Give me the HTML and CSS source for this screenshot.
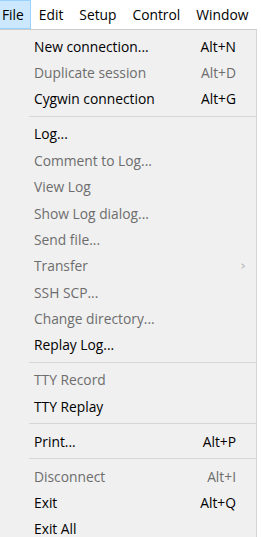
FILE: index.html
```html
<!DOCTYPE html>
<html lang="en">
<head>
  <meta charset="UTF-8" />
  <title>File menu</title>
  <link rel="stylesheet" href="styles.css">
</head>
<body>
  <div class="menubar">
    <span class="top active">File</span>
    <span class="top">Edit</span>
    <span class="top">Setup</span>
    <span class="top">Control</span>
    <span class="top">Window</span>
  </div>
  <div class="dropdown">
    <div class="item"><span>New connection...</span><span class="key">Alt+N</span></div>
    <div class="item off"><span>Duplicate session</span><span class="key">Alt+D</span></div>
    <div class="item"><span>Cygwin connection</span><span class="key">Alt+G</span></div>
    <div class="sep"></div>
    <div class="item"><span>Log...</span></div>
    <div class="item off"><span>Comment to Log...</span></div>
    <div class="item off"><span>View Log</span></div>
    <div class="item off"><span>Show Log dialog...</span></div>
    <div class="item off"><span>Send file...</span></div>
    <div class="item off"><span>Transfer</span><span class="arrow">&gt;</span></div>
    <div class="item off"><span>SSH SCP...</span></div>
    <div class="item off"><span>Change directory...</span></div>
    <div class="item"><span>Replay Log...</span></div>
    <div class="sep"></div>
    <div class="item off"><span>TTY Record</span></div>
    <div class="item"><span>TTY Replay</span></div>
    <div class="sep"></div>
    <div class="item"><span>Print...</span><span class="key">Alt+P</span></div>
    <div class="sep"></div>
    <div class="item off"><span>Disconnect</span><span class="key">Alt+I</span></div>
    <div class="item"><span>Exit</span><span class="key">Alt+Q</span></div>
    <div class="item"><span>Exit All</span></div>
  </div>
</body>
</html>
```

FILE: styles.css
```css
body { margin: 0; background: #fff; font-family: "Open Sans", "Noto Sans", sans-serif; font-size: 13.8px; color: #000; }
.menubar { display: flex; height: 29px; align-items: stretch; }
.top { display: flex; align-items: center; padding: 0 7px; border: 1px solid transparent; }
.top.active { background: #cce8ff; border-color: #99d1ff; border-left: 0; padding-left: 2px; padding-right: 6px; }
.dropdown { width: 257px; box-sizing: border-box; background: #f0f0f0; border-top: 1px solid #ccc; border-right: 1px solid #d5d5d5; padding: 3px 0 0; }
.item { display: flex; align-items: center; height: 26.4px; padding: 0 20px 0 34px; }
.item .key { margin-left: auto; }
.item .arrow { margin-left: auto; margin-right: -10px; font-size: 11px; transform: scaleX(0.6); color: #999; }
.item.off { color: #6d6d6d; }
.sep { height: 1px; background: #d7d7d7; margin: 4px 0 3.5px 29px; }
```
